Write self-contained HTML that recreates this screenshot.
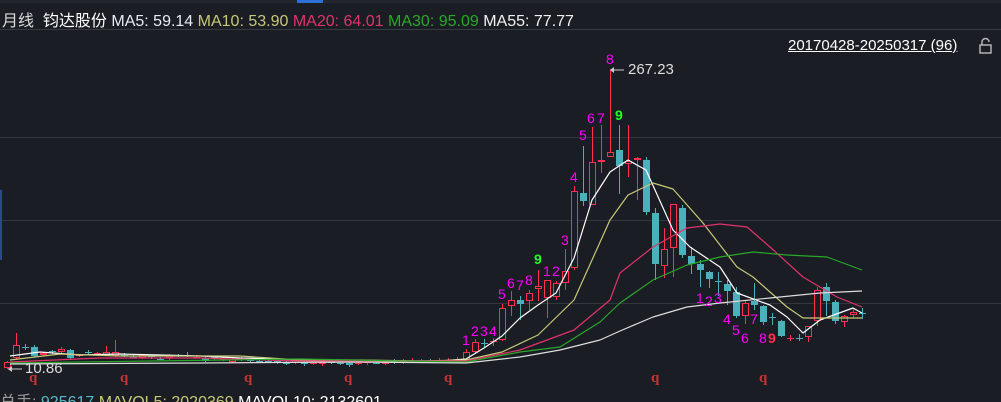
<!DOCTYPE html>
<html><head><meta charset="utf-8"><style>
html,body{margin:0;padding:0;background:#1a1d23;width:1001px;height:402px;overflow:hidden}
body{position:relative;font-family:"Liberation Sans","Noto Sans CJK SC",sans-serif}
.t{position:absolute;white-space:nowrap}
svg{position:absolute;left:0;top:0}
</style></head><body>
<svg id="s" width="1001" height="402" xmlns="http://www.w3.org/2000/svg">
<rect x="0" y="0" width="1001" height="3" fill="#23262d"/>
<rect x="297" y="0" width="26" height="3" fill="#2f6fd8"/>
<line x1="0" y1="29.5" x2="1001" y2="29.5" stroke="#363a42"/>
<line x1="0" y1="137.5" x2="1001" y2="137.5" stroke="#33363c"/>
<line x1="0" y1="220.5" x2="1001" y2="220.5" stroke="#33363c"/>
<line x1="0" y1="303.5" x2="1001" y2="303.5" stroke="#33363c"/>
<rect x="0" y="190" width="2" height="70" fill="#2a4a8a"/>
<g id="c"></g>
<line x1="610" y1="70" x2="624" y2="70" stroke="#ccc"/><path d="M610 70 l4 -3 v6z" fill="#ccc"/>
<line x1="8" y1="369" x2="22" y2="369" stroke="#ccc"/><path d="M8 369 l4 -3 v6z" fill="#ccc"/>
<g fill="none" stroke="#bbb" stroke-width="1.4"><rect x="980" y="45" width="11" height="8"/><path d="M982 45 v-3 a3.5 3.5 0 0 1 7 0"/></g>
</svg>
<div class="t" style="left:2px;top:7px;font-size:16px;color:#ddd">月线&nbsp;&nbsp;<span style="color:#fff">钧达股份</span> <span style="color:#e8eaf4">MA5: 59.14</span> <span style="color:#c8c878">MA10: 53.90</span> <span style="color:#e0336c">MA20: 64.01</span> <span style="color:#2aa82a">MA30: 95.09</span> <span style="color:#f0f0f0">MA55: 77.77</span></div>
<div class="t" style="left:788px;top:37px;font-size:15px;color:#fff;text-decoration:underline">20170428-20250317 (96)</div>
<div class="t" style="left:628px;top:61px;font-size:15px;color:#ddd">267.23</div>
<div class="t" style="left:25px;top:360px;font-size:15px;color:#ddd">10.86</div>
<div class="t" style="left:0;top:388px;font-size:16px;color:#999">总手: <span style="color:#5ab8c8">925617</span> <span style="color:#c8c878">MAVOL5: 2020369</span> <span style="color:#fff">MAVOL10: 2132601</span></div>
<script>
var g=document.getElementById('c');
function X(i){return 7+i*9}
var R='#ff3050',T='#4ab0bc';
var d=[[368,362,361,369],[358,345,333,360],[347,347,344,350],[347,356,345,357],[355,353,352,356],[351,352,350,354],[352,349,347,354],[350,358,349,359],[356,355,354,357],[352,353,350,355],[354,353,352,355],[355,352,346,356],[356,352,340,357],[355,356,353,357],[357,357,355,358],[358,355,354,359],[356,357,355,359],[359,359,357,360],[358,355,354,360],[355,356,354,357],[355,356,352,357],[358,357,355,358],[358,361,357,362],[357,359,356,360],[360,359,357,361],[362,359,358,363],[359,360,357,361],[360,361,358,362],[361,361,358,362],[361,361,359,362],[361,363,359,364],[362,364,360,365],[363,360,359,364],[362,364,360,366],[364,363,361,365],[364,362,361,366],[362,363,360,364],[363,364,361,365],[363,365,361,367],[364,363,361,365],[363,362,360,365],[363,363,360,364],[364,362,360,365],[362,363,359,364],[362,361,359,364],[362,362,358,363],[362,361,359,363],[362,362,359,363],[361,361,358,362],[361,360,358,362],[361,360,357,362],
[361,352,349,362],[352,342,339,354],[343,343,339,347],[341,341,338,346],[340,308,304,341],[306,300,291,316],[300,304,296,320],[301,293,290,310],[289,286,270,301],[298,280,280,318],[297,283,281,300],[283,271,249,290],[268,191,186,270],[193,201,146,206],[205,162,127,205],[162,160,125,173],[157,152,70,157],[150,166,125,194],[164,161,125,177],[160,158,157,200],[160,212,157,215],[213,264,208,280],[266,249,228,278],[248,204,204,277],[208,255,205,258],[256,264,247,274],[264,270,260,287],[272,279,271,288],[281,281,272,296],[284,291,280,305],[292,316,287,318],[316,303,300,324],[301,305,283,310],[306,322,305,325],[317,317,313,325],[321,336,320,337],[338,338,335,341],[338,338,334,341],[337,326,326,342],[321,290,287,326],[287,301,283,316],[302,321,300,324],[322,316,315,327],[315,312,308,318],[313,313,308,319]];
var h='';
d.forEach(function(v,i){var x=X(i),o=v[0],c=v[1],col=(c<o)?R:(c>o?T:(i%3==0?R:T));
var top=Math.min(o,c),bot=Math.max(o,c);
h+='<line x1="'+(x+.5)+'" y1="'+v[2]+'" x2="'+(x+.5)+'" y2="'+v[3]+'" stroke="'+col+'"/>';
if(bot-top<1.5)h+='<line x1="'+(x-3)+'" y1="'+(top+.5)+'" x2="'+(x+4)+'" y2="'+(top+.5)+'" stroke="'+col+'"/>';
else if(col==R)h+='<rect x="'+(x-2.5)+'" y="'+(top+.5)+'" width="6" height="'+(bot-top-1)+'" fill="#1a1d23" stroke="'+R+'"/>';
else h+='<rect x="'+(x-3)+'" y="'+top+'" width="7" height="'+(bot-top)+'" fill="'+T+'"/>';});
function L(p,col){h+='<polyline fill="none" stroke="'+col+'" stroke-width="1.2" stroke-linejoin="round" points="'+p+'"/>'}
L('10,356 40,352 80,355 120,354 160,355 200,356 240,358 280,359 320,362 360,362 400,361 440,361 466,359 484,348 502,336 520,318 538,305 556,293 574,258 592,200 610,172 628,160 646,170 664,210 673,230 690,247 720,267 737,293 770,305 787,317 803,333 820,320 853,308 862,313','#fff');
L('10,360 60,354 120,356 180,356 240,356 300,360 360,360 420,361 466,360 502,352 538,335 574,300 592,260 610,220 628,195 653,183 673,189 703,223 737,267 753,277 787,307 803,318 827,318 862,318','#c8c878');
L('10,362 100,358 200,358 300,361 400,361 466,361 520,350 574,330 610,300 620,273 653,247 687,228 720,224 747,227 770,247 803,277 837,297 862,307','#e0336c');
L('10,363 150,361 300,359 400,361 466,362 520,352 560,347 600,322 620,303 653,280 687,265 720,257 753,252 787,255 827,257 862,270','#2aa82a');
L('10,364 200,363 350,362 466,363 520,357 560,350 600,340 620,331 653,317 687,307 720,303 770,298 820,293 862,291','#ddd');
g.innerHTML=h;
</script>
<svg width="1001" height="402" style="pointer-events:none" font-family="Liberation Sans,sans-serif" font-size="14">
<g fill="#f0f">
<text x="462" y="345">1</text><text x="471" y="336">2</text><text x="480" y="336">3</text><text x="489" y="336">4</text>
<text x="498" y="299">5</text><text x="507" y="288">6</text><text x="516" y="290">7</text><text x="525" y="285">8</text>
<text x="543" y="276">1</text><text x="552" y="276">2</text><text x="561" y="245">3</text><text x="570" y="182">4</text>
<text x="579" y="140">5</text><text x="587" y="123">6</text><text x="597" y="123">7</text><text x="606" y="64">8</text>
<text x="696" y="303">1</text><text x="705" y="306">2</text><text x="714" y="303">3</text><text x="723" y="324">4</text>
<text x="732" y="335">5</text><text x="741" y="343">6</text><text x="750" y="324">7</text><text x="759" y="343">8</text>
</g>
<text x="534" y="264" fill="#2f2" font-weight="bold">9</text>
<text x="615" y="120" fill="#2f2" font-weight="bold">9</text>
<text x="768" y="343" fill="#ff3050" font-weight="bold">9</text>
<g fill="#c83232" font-family="Liberation Serif,serif" font-weight="bold" font-size="15">
<text x="29" y="382">q</text><text x="120" y="382">q</text><text x="244" y="382">q</text><text x="344" y="382">q</text><text x="444" y="382">q</text><text x="651" y="382">q</text><text x="759" y="382">q</text>
</g>
</svg>
</body></html>
